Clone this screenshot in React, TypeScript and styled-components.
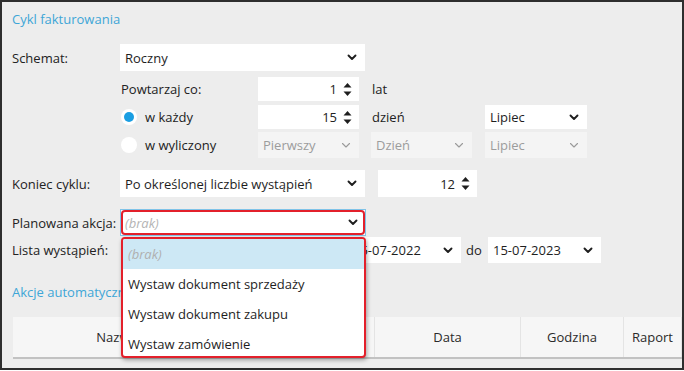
import React from 'react';

import styled, { createGlobalStyle } from 'styled-components';

const GlobalStyle = createGlobalStyle`
  html, body {
    margin: 0;
    padding: 0;
    background: #ffffff;
  }
  body {
    font-family: "Open Sans", "Noto Sans", sans-serif;
    font-size: 13px;
    color: #222;
  }
`;

const Chevron = ({ disabled }: { disabled?: boolean }) => (
  <svg width="10" height="7" viewBox="0 0 10 7">
    <polyline
      points="1.5,1.5 5,5 8.5,1.5"
      fill="none"
      stroke={disabled ? '#9a9a9a' : '#1e1e1e'}
      strokeWidth={disabled ? 1.1 : 1.9}
      strokeLinecap="round"
      strokeLinejoin="round"
    />
  </svg>
);

const Arrows = () => (
  <svg width="9" height="15" viewBox="0 0 9 15">
    <polygon points="0.5,5.5 4.5,1 8.5,5.5" fill="#1e1e1e" />
    <polygon points="0.5,9.5 8.5,9.5 4.5,14" fill="#1e1e1e" />
  </svg>
);

const Select = ({
  value,
  w,
  disabled,
  placeholder,
  focused,
}: {
  value: string;
  w: number;
  disabled?: boolean;
  placeholder?: boolean;
  focused?: boolean;
}) => (
  <SelectBox $w={w} $disabled={disabled} $focused={focused}>
    <SelectValue $disabled={disabled} $placeholder={placeholder}>
      {value}
    </SelectValue>
    <Chevron disabled={disabled} />
  </SelectBox>
);

const Spinner = ({ value, w }: { value: string; w: number }) => (
  <SpinnerBox $w={w}>
    <span>{value}</span>
    <Arrows />
  </SpinnerBox>
);

const Radio = ({ checked, label }: { checked?: boolean; label: string }) => (
  <RadioLabel>
    <RadioCircle>{checked && <RadioDot />}</RadioCircle>
    {label}
  </RadioLabel>
);

const options = ['(brak)', 'Wystaw dokument sprzedaży', 'Wystaw dokument zakupu', 'Wystaw zamówienie'];

const App = () => {
  return (
    <>
      <GlobalStyle />
      <Window>
        <SectionTitle>Cykl fakturowania</SectionTitle>

        <Row $mt={16} $h={27}>
          <Label>Schemat:</Label>
          <Select value="Roczny" w={245} />
        </Row>

        <Row $mt={6} $h={24}>
          <Label />
          <SubLabel>Powtarzaj co:</SubLabel>
          <Spinner value="1" w={101} />
          <Unit $w={126}>lat</Unit>
        </Row>

        <Row $mt={4} $h={24}>
          <Label />
          <SubLabel>
            <Radio checked label="w każdy" />
          </SubLabel>
          <Spinner value="15" w={101} />
          <Unit $w={126}>dzień</Unit>
          <Select value="Lipiec" w={102} />
        </Row>

        <Row $mt={3} $h={26}>
          <Label />
          <SubLabel>
            <Radio label="w wyliczony" />
          </SubLabel>
          <Controls $gap={12}>
            <Select value="Pierwszy" w={101} disabled />
            <Select value="Dzień" w={101} disabled />
          </Controls>
          <Spacer $w={13} />
          <Select value="Lipiec" w={102} disabled />
        </Row>

        <Row $mt={12} $h={27}>
          <Label>Koniec cyklu:</Label>
          <Controls $gap={13}>
            <Select value="Po określonej liczbie wystąpień" w={245} />
            <Spinner value="12" w={99} />
          </Controls>
        </Row>

        <Row $mt={12} $h={27} $raised>
          <Label>Planowana akcja:</Label>
          <ComboWrap>
            <Select value="(brak)" w={246} placeholder focused />
            <DropList>
              {options.map((o, i) => (
                <DropItem key={o} $active={i === 0}>
                  {o}
                </DropItem>
              ))}
            </DropList>
          </ComboWrap>
        </Row>

        <Row $mt={1} $h={26}>
          <Label>Lista wystąpień:</Label>
          <Spacer $w={228} />
          <Select value="15-07-2022" w={113} />
          <Unit $w={27} $pl={5}>
            do
          </Unit>
          <Select value="15-07-2023" w={113} />
        </Row>

        <SectionTitle $mt={20}>Akcje automatyczne</SectionTitle>

        <TableHead>
          <HeadCell $w={208}>Nazwa</HeadCell>
          <HeadCell $w={154} />
          <HeadCell $w={146}>Data</HeadCell>
          <HeadCell $w={103}>Godzina</HeadCell>
          <HeadCell $w={58}>Raport</HeadCell>
          <HeadCell $w={40} />
        </TableHead>
      </Window>
    </>
  );
};

const Window = styled.div`
  position: relative;
  width: 684px;
  height: 370px;
  box-sizing: border-box;
  border: 2px solid #2e2e2e;
  background: #ededed;
  padding: 8px 0 0 10px;
  overflow: hidden;
`;

const SectionTitle = styled.div<{ $mt?: number }>`
  margin-top: ${(p) => p.$mt ?? 0}px;
  height: 18px;
  line-height: 18px;
  color: #3ea6d7;
  font-size: 13px;
`;

const Row = styled.div<{ $mt: number; $h: number; $raised?: boolean }>`
  display: flex;
  align-items: center;
  margin-top: ${(p) => p.$mt}px;
  height: ${(p) => p.$h}px;
  position: relative;
  z-index: ${(p) => (p.$raised ? 5 : 1)};
`;

const Label = styled.div`
  width: 108px;
  flex: none;
  white-space: nowrap;
`;

const SubLabel = styled.div`
  width: 138px;
  flex: none;
  display: flex;
  align-items: center;
  padding-left: 1px;
  box-sizing: border-box;
`;

const Unit = styled.div<{ $w: number; $pl?: number }>`
  width: ${(p) => p.$w}px;
  flex: none;
  box-sizing: border-box;
  padding-left: ${(p) => p.$pl ?? 13}px;
`;

const Controls = styled.div<{ $gap: number }>`
  display: flex;
  align-items: center;
  gap: ${(p) => p.$gap}px;
  height: 100%;
`;

const Spacer = styled.div<{ $w: number }>`
  width: ${(p) => p.$w}px;
  flex: none;
`;

const SelectBox = styled.div<{ $w: number; $disabled?: boolean; $focused?: boolean }>`
  position: relative;
  width: ${(p) => p.$w}px;
  height: 100%;
  flex: none;
  box-sizing: border-box;
  display: flex;
  align-items: center;
  justify-content: space-between;
  padding: 0 7px 0 4px;
  background: ${(p) => (p.$disabled ? '#f4f4f4' : '#ffffff')};
  border: 1px solid ${(p) => (p.$focused ? '#7fc3e8' : 'transparent')};

  ${(p) =>
    p.$focused &&
    `
    &::after {
      content: '';
      position: absolute;
      inset: 0px;
      border: 2px solid #e3202b;
      border-radius: 4px;
    }
  `}
`;

const SelectValue = styled.span<{ $disabled?: boolean; $placeholder?: boolean }>`
  color: ${(p) => (p.$disabled ? '#9c9c9c' : p.$placeholder ? '#b4b4b4' : '#1e1e1e')};
  font-style: ${(p) => (p.$placeholder ? 'italic' : 'normal')};
  white-space: nowrap;
`;

const SpinnerBox = styled.div<{ $w: number }>`
  width: ${(p) => p.$w}px;
  height: 100%;
  flex: none;
  box-sizing: border-box;
  display: flex;
  align-items: center;
  justify-content: flex-end;
  gap: 6px;
  padding-right: 7px;
  background: #ffffff;

  svg {
    flex: none;
  }
`;

const RadioLabel = styled.div`
  display: flex;
  align-items: center;
  gap: 8px;
`;

const RadioCircle = styled.div`
  width: 16px;
  height: 16px;
  border-radius: 50%;
  background: #ffffff;
  display: flex;
  align-items: center;
  justify-content: center;
`;

const RadioDot = styled.div`
  width: 10px;
  height: 10px;
  border-radius: 50%;
  background: #1a9ee2;
`;

const ComboWrap = styled.div`
  position: relative;
  height: 100%;
  display: flex;
`;

const DropList = styled.div`
  position: absolute;
  top: 28px;
  left: 1px;
  width: 245px;
  height: 121px;
  box-sizing: border-box;
  background: #ffffff;
  border: 2px solid #e3202b;
  border-radius: 4px;
  box-shadow: 1px 2px 4px rgba(0, 0, 0, 0.35);
  overflow: hidden;
`;

const DropItem = styled.div<{ $active?: boolean }>`
  height: 30px;
  line-height: 30px;
  padding-left: 5px;
  white-space: nowrap;
  background: ${(p) => (p.$active ? '#cde8f5' : 'transparent')};
  color: ${(p) => (p.$active ? '#b0b0b0' : '#1e1e1e')};
  font-style: ${(p) => (p.$active ? 'italic' : 'normal')};
`;

const TableHead = styled.div`
  display: flex;
  margin-top: 16px;
  margin-left: 1px;
  height: 40px;
  border-bottom: 2px solid #c2c2c2;
  width: max-content;
`;

const HeadCell = styled.div<{ $w: number }>`
  width: ${(p) => p.$w}px;
  flex: none;
  box-sizing: border-box;
  display: flex;
  align-items: center;
  justify-content: center;
  background: #f6f6f6;
  border-right: 1px solid #e4e4e4;
  color: #2a2a2a;
`;

export default App;
